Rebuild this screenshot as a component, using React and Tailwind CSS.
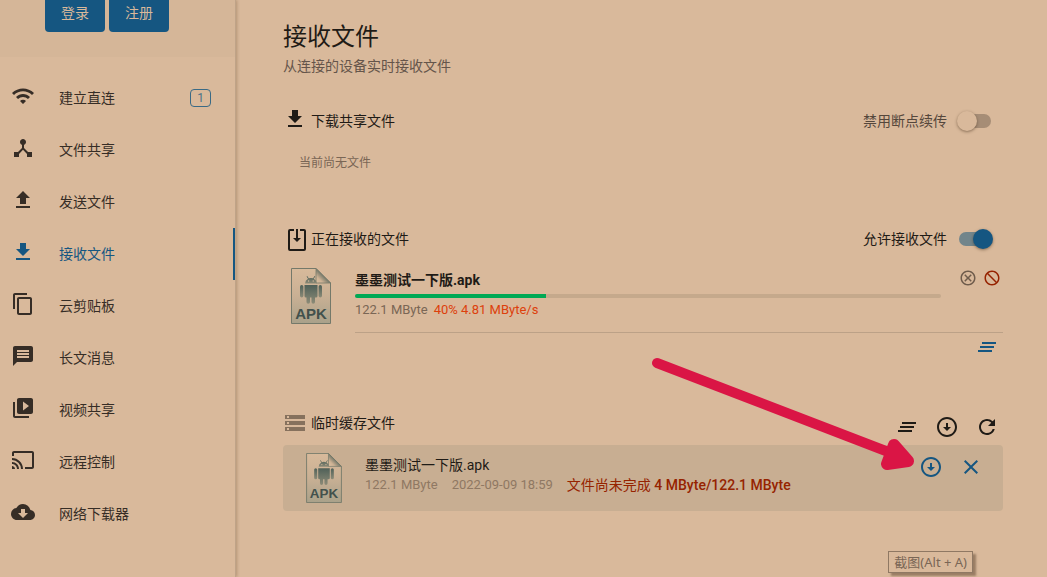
import { useState } from 'react'
import {
  MdBlock,
  MdCast,
  MdClearAll,
  MdClose,
  MdCloudDownload,
  MdContentCopy,
  MdDeviceHub,
  MdMessage,
  MdOutlineArrowCircleDown,
  MdOutlineCancel,
  MdRefresh,
  MdStorage,
  MdVideoLibrary,
  MdWifi,
} from 'react-icons/md'

function UploadIcon({ className }) {
  return (
    <svg viewBox="0 0 24 24" fill="currentColor" className={className}>
      <path d="M9 16h6v-6h4l-7-7-7 7h4v6zm-4 2h14v2H5z" />
    </svg>
  )
}

function DownloadIcon({ className }) {
  return (
    <svg viewBox="0 0 24 24" fill="currentColor" className={className}>
      <path d="M19 9h-4V3H9v6H5l7 7 7-7zM5 18v2h14v-2H5z" />
    </svg>
  )
}

function InboxIcon({ className }) {
  return (
    <svg viewBox="0 0 24 24" className={className}>
      <path
        d="M11 3H7Q6 3 6 4V22Q6 23 7 23H21Q22 23 22 22V4Q22 3 21 3H17"
        fill="none"
        stroke="currentColor"
        strokeWidth="2"
      />
      <path d="M13 2h2v9h3l-4 4-4-4h3z" fill="currentColor" />
    </svg>
  )
}

function ApkIcon({ className }) {
  return (
    <svg viewBox="0 0 40 56" className={className} aria-label="APK">
      <defs>
        <linearGradient id="apkPage" x1="0" y1="0" x2="0" y2="1">
          <stop offset="0" stopColor="#d8ba9b" />
          <stop offset="0.5" stopColor="#c9b094" />
          <stop offset="1" stopColor="#a9a18a" />
        </linearGradient>
        <linearGradient id="apkFold" x1="0" y1="1" x2="1" y2="0">
          <stop offset="0" stopColor="#dfc2a3" />
          <stop offset="0.25" stopColor="#cdb294" />
          <stop offset="0.5" stopColor="#77796a" />
        </linearGradient>
        <linearGradient id="apkRobot" x1="0" y1="0" x2="0" y2="1">
          <stop offset="0" stopColor="#4f6058" />
          <stop offset="1" stopColor="#8c8b77" />
        </linearGradient>
      </defs>
      <path d="M.5.5H25L39.500 15V55.500H.5z" fill="url(#apkPage)" stroke="#74796a" />
      <path d="M25 .5V15H39.500z" fill="url(#apkFold)" stroke="#74796a" strokeWidth="0.8" />
      <g fill="url(#apkRobot)">
        <path d="M14 15.500a5.800 5.800 0 0 1 3-4.800L15.600 8.500l.6-.4 1.500 2.200a7 7 0 0 1 4.400 0L23.600 8.100l.6.4-1.400 2.200a5.800 5.800 0 0 1 3 4.800z" />
        <path d="M13.500 17h13v11q0 1.500-1.500 1.500H24V34a1.500 1.500 0 0 1-3.500 0v-4.500h-1.500V34a1.500 1.500 0 0 1-3.500 0v-4.500H15q-1.500 0-1.500-1.500z" />
        <rect x="9" y="17" width="3.400" height="12.500" rx="1.700" />
        <rect x="27.600" y="17" width="3.400" height="12.500" rx="1.700" />
      </g>
      <circle cx="17.600" cy="13" r="0.700" fill="#d5b99b" />
      <circle cx="22.200" cy="13" r="0.700" fill="#d5b99b" />
      <text
        x="20"
        y="50.500"
        textAnchor="middle"
        fontSize="15"
        fontWeight="700"
        fontFamily="Liberation Sans, sans-serif"
        fill="#42514c"
      >
        APK
      </text>
    </svg>
  )
}

const menu = [
  { label: '建立直连', icon: MdWifi, badge: 1 },
  { label: '文件共享', icon: MdDeviceHub },
  { label: '发送文件', icon: UploadIcon },
  { label: '接收文件', icon: DownloadIcon, active: true },
  { label: '云剪贴板', icon: MdContentCopy },
  { label: '长文消息', icon: MdMessage },
  { label: '视频共享', icon: MdVideoLibrary },
  { label: '远程控制', icon: MdCast },
  { label: '网络下载器', icon: MdCloudDownload },
]

function Sidebar() {
  return (
    <aside className="w-[236px] shrink-0 border-r border-[#bfa388] shadow-[1px_0_3px_rgba(90,60,30,0.3)]">
      <div className="flex h-[57px] gap-1 bg-[#d5b698] pl-[45px]">
        {['登录', '注册'].map((label) => (
          <button
            key={label}
            className="-mt-1 h-9 w-15 rounded bg-[#155681] pb-0.5 text-sm text-[#d9b99b]"
          >
            {label}
          </button>
        ))}
      </div>
      <nav className="pt-[15px]">
        {menu.map(({ label, icon: Icon, badge, active }) => (
          <a
            key={label}
            href="#"
            className={`flex h-13 items-start py-3 pl-[11px] text-sm leading-7 ${
              active ? 'border-r-2 border-[#155681] text-[#155681]' : 'text-[#362d26]'
            }`}
          >
            <Icon className="size-6 shrink-0" />
            <span className="ml-6 flex-1">{label}</span>
            {badge && (
              <span className="mt-[5px] mr-6 w-[21px] rounded border border-[#3a6a85] text-center text-xs leading-4 text-[#4b7287]">
                {badge}
              </span>
            )}
          </a>
        ))}
      </nav>
    </aside>
  )
}

function Toggle({ label, checked, onChange, className }) {
  return (
    <label className={`flex cursor-pointer items-center gap-3 text-sm ${className}`}>
      {label}
      <span className="relative flex h-5 w-8 items-center">
        <input type="checkbox" checked={checked} onChange={onChange} className="peer sr-only" />
        <span className="h-3.5 w-8 rounded-full bg-[#a68d76] peer-checked:bg-[#72858b]" />
        <span className="absolute top-0 -left-0.5 size-5 rounded-full bg-[#d9b99b] shadow-[0_1px_3px_rgba(60,40,20,0.5)] peer-checked:left-3.5 peer-checked:bg-[#155681]" />
      </span>
    </label>
  )
}

function IconButton({ icon: Icon, label, className = 'size-6' }) {
  return (
    <button aria-label={label} className="block cursor-pointer">
      <Icon className={className} />
    </button>
  )
}

function ReceivingFile() {
  return (
    <div className="flex pl-2">
      <ApkIcon className="mt-0.5 h-14 w-10 shrink-0" />
      <div className="ml-6 flex-1">
        <div className="flex border-b border-[#bca187] pb-3.5">
          <div className="flex-1 pt-1">
            <div className="text-sm leading-5 font-bold text-[#1f1b16]">墨墨测试一下版.apk</div>
            <div className="mt-1 h-1 overflow-hidden rounded-full bg-[#c5a98c]">
              <div className="h-full bg-[#00a954]" style={{ width: '32.6%' }} />
            </div>
            <div className="flex gap-1.5 pt-1 text-[13px] leading-4">
              <span className="text-[#7a6655]">122.1 MByte</span>
              <span className="text-[#dd400c]">40% 4.81 MByte/s</span>
            </div>
          </div>
          <div className="ml-[18px] flex h-6 items-center gap-1.5 pr-0.5">
            <span className="text-[#6f5c4c]">
              <IconButton icon={MdOutlineCancel} label="取消" className="size-4.5" />
            </span>
            <span className="text-[#962300]">
              <IconButton icon={MdBlock} label="拒绝" className="size-4.5 rotate-90" />
            </span>
          </div>
        </div>
        <div className="flex justify-end pt-0.5 pr-1 text-[#155681]">
          <IconButton icon={MdClearAll} label="清空" />
        </div>
      </div>
    </div>
  )
}

function CachedFile() {
  return (
    <div className="relative flex items-start rounded bg-[#c8ae92] py-2 pr-5 pl-[23px]">
      <ApkIcon className="h-[50px] w-9 shrink-0" />
      <div className="ml-[23px] flex-1 pt-0.5">
        <div className="text-sm leading-5 text-[#1f1b16]">墨墨测试一下版.apk</div>
        <div className="flex gap-3.5 text-[13px] leading-5 text-[#8f7863]">
          <span>122.1 MByte</span>
          <span>2022-09-09 18:59</span>
          <span className="text-sm leading-5 text-[#962300]">
            文件尚未完成 <span className="font-medium">4 MByte/122.1 MByte</span>
          </span>
        </div>
      </div>
      <div className="flex gap-4 pt-0.5 text-[#155681]">
        <IconButton icon={MdOutlineArrowCircleDown} label="下载" />
        <IconButton icon={MdClose} label="删除" />
      </div>
      <svg
        viewBox="0 0 264 118"
        className="pointer-events-none absolute right-[88px] bottom-[38px] h-[118px] w-[264px]"
      >
        <path d="M6 8L240 98" stroke="#da1545" strokeWidth="10" strokeLinecap="round" />
        <path
          d="M243 90L257 106 236 109z"
          fill="#da1545"
          stroke="#da1545"
          strokeWidth="12"
          strokeLinejoin="round"
        />
      </svg>
    </div>
  )
}

export default function App() {
  const [noResume, setNoResume] = useState(false)
  const [allowReceive, setAllowReceive] = useState(true)

  return (
    <div className="relative flex min-h-screen overflow-hidden bg-[#d9b99b] font-['Roboto','Noto_Sans_CJK_SC',sans-serif] text-[#1f1b16]">
      <Sidebar />
      <main className="min-w-0 flex-1 pt-[21px] pr-11 pl-[47px]">
        <h1 className="text-2xl leading-8">接收文件</h1>
        <p className="mt-[3px] text-sm leading-5 text-[#65554a]">从连接的设备实时接收文件</p>

        <section className="mt-[31px]">
          <div className="flex items-center justify-between pr-3">
            <h2 className="flex items-start gap-1 text-sm leading-7">
              <DownloadIcon className="size-6" />
              下载共享文件
            </h2>
            <Toggle
              label="禁用断点续传"
              checked={noResume}
              onChange={() => setNoResume(!noResume)}
              className="text-[#55473c]"
            />
          </div>
          <p className="mt-[18px] pl-4 text-xs leading-5 text-[#7a6655]">当前尚无文件</p>
        </section>

        <section className="mt-[54px]">
          <div className="flex items-center justify-between pr-3">
            <h2 className="flex items-center gap-1 text-sm leading-6">
              <InboxIcon className="size-6" />
              正在接收的文件
            </h2>
            <Toggle
              label="允许接收文件"
              checked={allowReceive}
              onChange={() => setAllowReceive(!allowReceive)}
              className="text-[#1f1b16]"
            />
          </div>
          <div className="mt-[15px]">
            <ReceivingFile />
          </div>
        </section>

        <section className="mt-[52px]">
          <div className="flex items-start justify-between">
            <h2 className="flex items-center gap-1 text-sm leading-6">
              <MdStorage className="size-6 text-[#86715d]" />
              临时缓存文件
            </h2>
            <div className="flex gap-4 pt-1 pr-1">
              <IconButton icon={MdClearAll} label="清空" />
              <IconButton icon={MdOutlineArrowCircleDown} label="全部下载" />
              <IconButton icon={MdRefresh} label="刷新" />
            </div>
          </div>
          <div className="mt-1.5">
            <CachedFile />
          </div>
        </section>
      </main>
      <div
        role="tooltip"
        className="absolute right-[74px] bottom-1 border border-[#8f7863] bg-[#d9b99b] px-[5px] font-['Noto_Sans','Noto_Sans_CJK_SC',sans-serif] text-[13px] leading-5 text-[#7a6655] shadow-[3px_3px_2px_rgba(90,65,45,0.5)]"
      >
        截图(Alt + A)
      </div>
    </div>
  )
}
